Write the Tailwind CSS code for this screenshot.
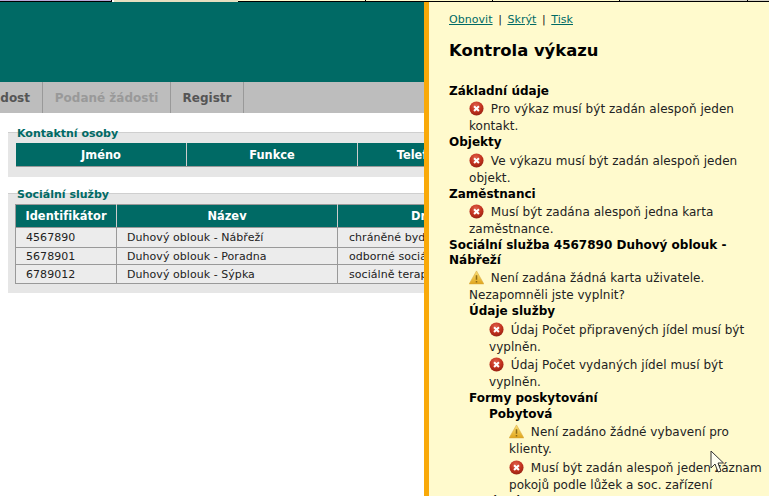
<!DOCTYPE html>
<html lang="cs">
<head>
  <meta charset="UTF-8" />
  <title>Kontrola výkazu</title>
  <script src="https://cdn.jsdelivr.net/npm/@tailwindcss/browser@4"></script>
</head>
<body class="w-[769px] h-[496px] overflow-hidden bg-white relative font-['DejaVu_Sans',sans-serif] text-[12px] leading-[17px] text-[#222]">

  <!-- ikony -->
  <svg class="absolute w-0 h-0">
    <defs>
      <radialGradient id="err" cx="45%" cy="30%" r="75%">
        <stop offset="0" stop-color="#e0604a"/>
        <stop offset="0.6" stop-color="#bf2f1c"/>
        <stop offset="1" stop-color="#8e2012"/>
      </radialGradient>
      <linearGradient id="warn" x1="0" y1="0" x2="0" y2="1">
        <stop offset="0" stop-color="#fbe27a"/>
        <stop offset="1" stop-color="#e0a51c"/>
      </linearGradient>
    </defs>
    <symbol id="icon-err" viewBox="0 0 16 16">
      <circle cx="8" cy="8" r="7.5" fill="url(#err)"/>
      <path d="M5.4 5.600l5.200 5M10.600 5.600l-5.200 5" stroke="#fff" stroke-width="2.2"/>
    </symbol>
    <symbol id="icon-warn" viewBox="0 0 16 16">
      <path d="M8 1L15.800 14.800H.2z" fill="url(#warn)" stroke="#d8a63a" stroke-width=".6"/>
      <path d="M8 5.500v5M8 11.600v1.600" stroke="#8d6a14" stroke-width="1.6"/>
    </symbol>
  </svg>

  <!-- horní proužek -->
  <div class="flex h-[2px]">
    <div class="w-[112px] bg-[#b9a9d8] border-r border-b border-black"></div>
    <div class="w-[2px] bg-white"></div>
    <div class="w-[124px] bg-[#e6dfc0]"></div>
    <div class="w-[128px] bg-[#fffacd] border-r border-b border-black"></div>
    <div class="w-[127px] bg-[#fffacd] border-r border-b border-black"></div>
    <div class="w-[127px] bg-[#fffacd] border-r border-b border-black"></div>
    <div class="w-[128px] bg-[#d8d4c8] border-r border-b border-black"></div>
    <div class="flex-1 bg-[#d8d4c8] border-b border-black"></div>
  </div>
  <div class="h-[80px] bg-[#006a65]"></div>

  <!-- záložky -->
  <div class="h-[31px] bg-[#bdbdbd] flex font-bold leading-[32px] text-[#555]">
    <div class="w-[43px] border-r border-[#999] flex justify-end pr-[12px] overflow-hidden whitespace-nowrap">ádost</div>
    <div class="w-[128px] border-r border-[#999] text-center text-[#999]">Podané žádosti</div>
    <div class="w-[73px] border-r border-[#999] text-center">Registr</div>
  </div>

  <!-- obsah -->
  <div class="pl-[8px] pt-[19px] w-[425px] overflow-hidden text-[11px]">
    <div class="relative w-[500px] h-[45px] bg-[#e6e6e6] border-t border-[#cfcfcf] pl-[8px] pt-[10px]">
      <div class="absolute left-[9px] top-[-8px] font-bold text-[#006a65] leading-[17px]">Kontaktní osoby</div>
      <div class="flex h-[24px] bg-[#006a65] text-white font-bold text-[11.4px] leading-[24px] text-center border-b border-[#999]">
        <div class="w-[171px] border-r border-[#ccc]">Jméno</div>
        <div class="w-[171px] border-r border-[#ccc]">Funkce</div>
        <div class="w-[120px] pl-[4px]">Telefon</div>
      </div>
    </div>

    <div class="relative w-[500px] h-[100px] mt-[16px] bg-[#e6e6e6] border-t border-[#cfcfcf] pl-[7px] pt-[10px]">
      <div class="absolute left-[9px] top-[-8px] font-bold text-[#006a65] leading-[17px]">Sociální služby</div>
      <table class="w-[493px] table-fixed border-collapse bg-[#ececec] tracking-[0.05px]">
        <thead>
          <tr class="h-[23px] bg-[#006a65] text-white text-[11.4px]">
            <th class="w-[101px] border border-[#999] border-r-[#ccc] font-bold">Identifikátor</th>
            <th class="w-[221px] border border-[#999] border-r-[#ccc] font-bold">Název</th>
            <th class="border border-[#999] font-bold text-left pl-[73px]">Druh</th>
          </tr>
        </thead>
        <tbody class="leading-[15px]">
          <tr class="h-[20px]"><td class="border border-[#999] pl-[10px]">4567890</td><td class="border border-[#999] pl-[10px]">Duhový oblouk - Nábřeží</td><td class="border border-[#999] pl-[11px] whitespace-nowrap">chráněné bydlení</td></tr>
          <tr class="h-[17px]"><td class="border border-[#999] pl-[10px]">5678901</td><td class="border border-[#999] pl-[10px]">Duhový oblouk - Poradna</td><td class="border border-[#999] pl-[11px] whitespace-nowrap">odborné sociální</td></tr>
          <tr class="h-[19px]"><td class="border border-[#999] pl-[10px]">6789012</td><td class="border border-[#999] pl-[10px]">Duhový oblouk - Sýpka</td><td class="border border-[#999] pl-[11px] whitespace-nowrap">sociálně terapeutické</td></tr>
        </tbody>
      </table>
    </div>
  </div>

  <!-- panel kontroly -->
  <div class="absolute left-[424px] top-[2px] right-0 bottom-0 bg-[#fffacd] border-l-[5px] border-[#f9a908] pl-[20px] overflow-hidden tracking-[0.05px]">
    <div class="pt-[9px] text-[11px] text-[#006a65]"><a class="underline">Obnovit</a> <span class="text-[#222] px-[2px]">|</span> <a class="underline">Skrýt</a> <span class="text-[#222] px-[2px]">|</span> <a class="underline">Tisk</a></div>
    <h1 class="mt-[11px] mb-[21px] text-[16.4px] leading-[24px] font-bold text-black tracking-normal">Kontrola výkazu</h1>

    <div class="font-bold text-black leading-[15px] tracking-normal">Základní údaje</div>
    <div class="pl-[20px] pt-[2px]"><svg class="inline w-[15px] h-[15px] mr-[3px] align-[-3px]"><use href="#icon-err"/></svg> Pro výkaz musí být zadán alespoň jeden kontakt.</div>
    <div class="font-bold text-black leading-[15px] tracking-normal">Objekty</div>
    <div class="pl-[20px] pt-[3px]"><svg class="inline w-[15px] h-[15px] mr-[3px] align-[-3px]"><use href="#icon-err"/></svg> Ve výkazu musí být zadán alespoň jeden objekt.</div>
    <div class="font-bold text-black leading-[15px] tracking-normal">Zaměstnanci</div>
    <div class="pl-[20px] pt-[2px]"><svg class="inline w-[15px] h-[15px] mr-[3px] align-[-3px]"><use href="#icon-err"/></svg> Musí být zadána alespoň jedna karta zaměstnance.</div>
    <div class="font-bold text-black leading-[15px] tracking-normal">Sociální služba 4567890 Duhový oblouk - Nábřeží</div>
    <div class="pl-[20px]">
      <div class="pt-[2px]"><svg class="inline w-[15px] h-[15px] mr-[3px] align-[-3px]"><use href="#icon-warn"/></svg> Není zadána žádná karta uživatele. Nezapomněli jste vyplnit?</div>
      <div class="font-bold text-black leading-[15px] tracking-normal">Údaje služby</div>
      <div class="pl-[20px] pt-[3px]"><svg class="inline w-[15px] h-[15px] mr-[3px] align-[-3px]"><use href="#icon-err"/></svg> Údaj Počet připravených jídel musí být vyplněn.</div>
      <div class="pl-[20px] pt-[1px]"><svg class="inline w-[15px] h-[15px] mr-[3px] align-[-3px]"><use href="#icon-err"/></svg> Údaj Počet vydaných jídel musí být vyplněn.</div>
      <div class="font-bold text-black leading-[15px] tracking-normal">Formy poskytování</div>
      <div class="pl-[20px]">
        <div class="font-bold text-black leading-[15px] tracking-normal pt-[1px]">Pobytová</div>
        <div class="pl-[20px] pt-[2px]"><svg class="inline w-[15px] h-[15px] mr-[3px] align-[-3px]"><use href="#icon-warn"/></svg> Není zadáno žádné vybavení pro klienty.</div>
        <div class="pl-[20px] pt-[2px]"><svg class="inline w-[15px] h-[15px] mr-[3px] align-[-3px]"><use href="#icon-err"/></svg> Musí být zadán alespoň jeden záznam pokojů podle lůžek a soc. zařízení</div>
      </div>
      <div class="font-bold text-black leading-[15px] tracking-normal">Terénní</div>
    </div>
  </div>

  <!-- kurzor -->
  <svg class="absolute left-[710px] top-[450px] w-[14px] h-[24px]" viewBox="0 0 14 24"><path d="M1 1v17l4-4 3 8 3-1-3-8h5.500z" fill="#fffef0" stroke="#333" stroke-width="1"/></svg>
</body>
</html>
